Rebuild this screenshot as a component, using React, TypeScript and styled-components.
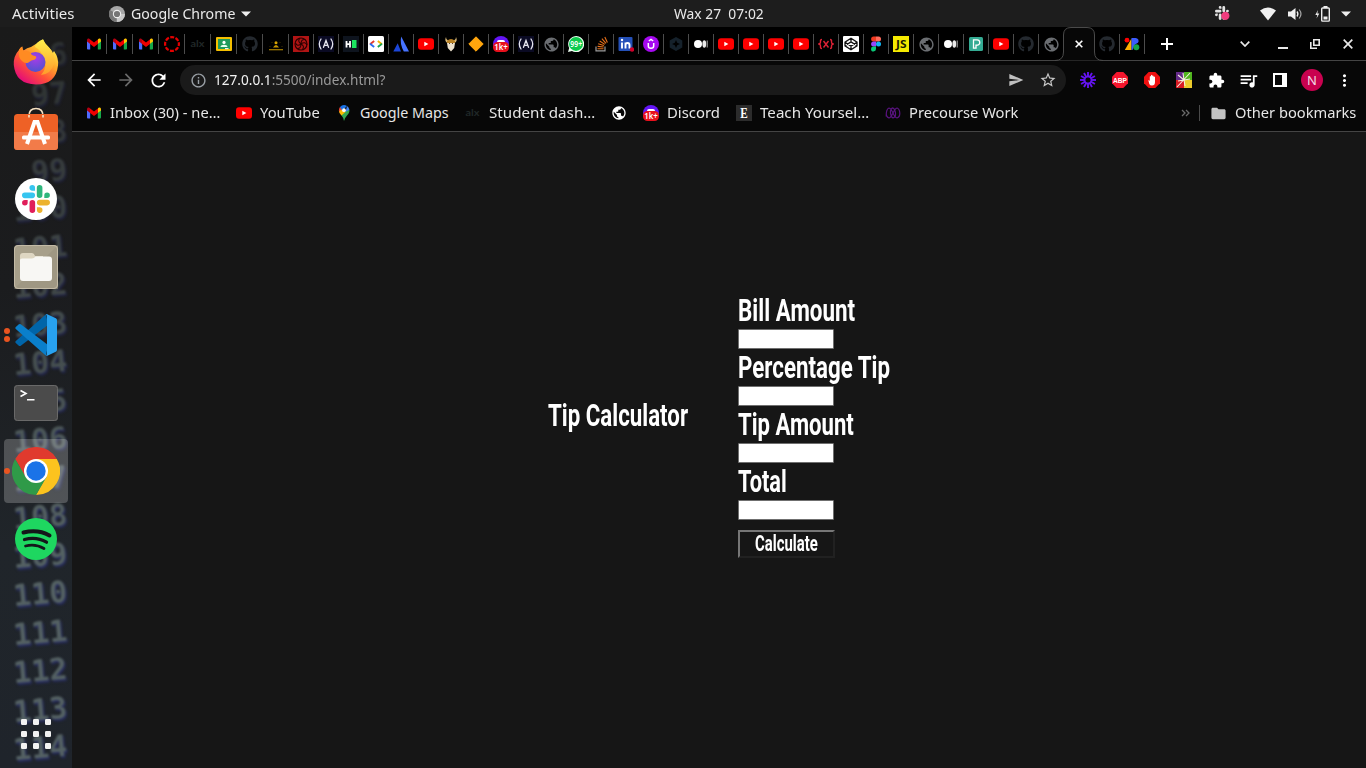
import React, { useLayoutEffect, useRef, useState } from "react";
import styled, { createGlobalStyle } from "styled-components";
import {
  MdPublic, MdQueueMusic, MdExtension, MdArrowBack, MdArrowForward, MdRefresh,
  MdStarBorder, MdSend, MdMoreVert, MdFolder, MdOutlineInfo,
} from "react-icons/md";
import { FaGithub } from "react-icons/fa";

const GlobalStyle = createGlobalStyle`
  * { box-sizing: border-box; }
  body { margin: 0; background: #161616; overflow: hidden; }
  svg { display: block; flex: none; }
`;

const UI = `"Noto Sans", "Open Sans", sans-serif`;

/* ---------- text set to a fixed measure ---------- */
const FitBox = styled.span<{ $w: number }>`
  display: block;
  flex: none;
  width: ${(p) => p.$w}px;
  white-space: pre;
`;
const FitInner = styled.span`
  display: inline-block;
  transform-origin: 0 50%;
`;
function Fit({ w, children }: { w: number; children: React.ReactNode }) {
  const ref = useRef<HTMLSpanElement>(null);
  const [scale, setScale] = useState(1);
  useLayoutEffect(() => {
    if (ref.current) setScale(w / ref.current.offsetWidth);
  }, [w]);
  return (
    <FitBox $w={w}>
      <FitInner ref={ref} style={{ transform: `scaleX(${scale})` }}>{children}</FitInner>
    </FitBox>
  );
}

/* ---------- layout ---------- */
const Desktop = styled.div`
  width: 1366px;
  height: 768px;
  display: flex;
  flex-direction: column;
  overflow: hidden;
  font-family: ${UI};
`;
const TopBar = styled.header`
  height: 27px;
  flex: none;
  display: grid;
  grid-template-columns: 662px 90px 1fr;
  align-items: center;
  padding: 0 12px;
  background: #1d1d1d;
  color: #e9e9e9;
  font-size: 14px;
  line-height: 26px;
`;
const TopLeft = styled.div`
  display: flex;
  align-items: center;
`;
const AppMenu = styled.div`
  display: flex;
  align-items: center;
  gap: 6px;
  margin-left: 35px;
`;
const Tray = styled.div`
  display: flex;
  align-items: center;
  justify-content: flex-end;
  padding-right: 3px;
`;
const TrayIcon = styled.span<{ $gap: number }>`
  margin-left: ${(p) => p.$gap}px;
`;
const Body = styled.div`
  flex: 1;
  display: flex;
  min-height: 0;
`;
const Dock = styled.nav`
  position: relative;
  width: 72px;
  flex: none;
  display: flex;
  flex-direction: column;
  gap: 4px;
  padding: 4px 4px 2px;
  background: linear-gradient(180deg, #1a1a1a 0%, #1b1c1e 35%, #20252a 70%, #1f242b 100%);
  overflow: hidden;
`;
const Wallpaper = styled.div`
  position: absolute;
  inset: 13px 5px auto 0;
  display: flex;
  flex-direction: column;
  align-items: flex-end;
  gap: 8.5px;
  filter: blur(1.2px);
`;
const LineNumber = styled.span<{ $o: number }>`
  height: 30px;
  font: bold 30px/30px "DejaVu Sans Mono", monospace;
  color: #7b8d8c;
  opacity: ${(p) => p.$o};
  transform: rotate(-5deg);
  text-shadow: 1px 2px 2px #2f3590;
`;
const DockItem = styled.div<{ $active?: boolean; $last?: boolean }>`
  position: relative;
  height: 64px;
  flex: none;
  display: flex;
  align-items: center;
  justify-content: center;
  border-radius: 4px;
  background: ${(p) => (p.$active ? "rgba(255,255,255,.22)" : "transparent")};
  margin-top: ${(p) => (p.$last ? "auto" : "0")};
`;
const Pips = styled.div`
  position: absolute;
  left: 0;
  top: 0;
  height: 100%;
  display: flex;
  flex-direction: column;
  justify-content: center;
  gap: 2px;
`;
const Pip = styled.i`
  width: 6px;
  height: 6px;
  border-radius: 50%;
  background: #e95420;
`;
const Browser = styled.main`
  flex: 1;
  display: flex;
  flex-direction: column;
  min-width: 0;
  background: #161616;
`;
const TabStrip = styled.div`
  height: 34px;
  flex: none;
  display: flex;
  background: #000;
  border-bottom: 1px solid #444;
  padding: 1px 13px 0 9px;
`;
const Tab = styled.div<{ $w: number; $sep: boolean }>`
  width: ${(p) => p.$w}px;
  flex: none;
  height: 32px;
  display: flex;
  align-items: center;
  padding-left: ${(p) => (p.$w === 26 ? 5 : 4)}px;
  background: ${(p) =>
    p.$sep ? "linear-gradient(#4c4c4c,#4c4c4c) right 6px / 1px 20px no-repeat" : "none"};
`;
const ActiveTab = styled.div`
  position: relative;
  width: 31px;
  flex: none;
  display: flex;
  align-items: center;
  justify-content: center;
  padding-right: 2px;
`;
const TabShape = styled.svg`
  position: absolute;
  left: -9px;
  top: -1px;
`;
const TabClose = styled.svg`
  position: relative;
`;
const NewTab = styled.div`
  width: 44px;
  display: flex;
  align-items: center;
  justify-content: center;
`;
const WindowControls = styled.div`
  margin-left: auto;
  display: flex;
  align-items: center;
`;
const Control = styled.svg<{ $gap?: number }>`
  margin-left: ${(p) => p.$gap ?? 0}px;
`;
const Toolbar = styled.div`
  height: 38px;
  flex: none;
  display: flex;
  align-items: center;
  padding: 0 6px;
  background: #070707;
`;
const Tool = styled.div`
  width: 32px;
  height: 32px;
  flex: none;
  display: flex;
  align-items: center;
  justify-content: center;
`;
const Omnibox = styled.div`
  flex: 1;
  height: 30px;
  margin: 0 6px;
  padding: 0 2px;
  display: flex;
  align-items: center;
  border-radius: 15px;
  background: #1a1a1a;
  font-size: 14px;
  line-height: 28px;
  color: #9a9a9a;
`;
const Host = styled.span`
  color: #f2f2f2;
`;
const Url = styled.div`
  flex: 1;
`;
const Avatar = styled.div`
  width: 22px;
  height: 22px;
  border-radius: 50%;
  background: #c9024f;
  color: #f3dce6;
  font-size: 13px;
  line-height: 22px;
  text-align: center;
`;
const BookmarkBar = styled.div`
  height: 33px;
  flex: none;
  display: flex;
  align-items: center;
  gap: 16px;
  padding: 0 10px 4px 14px;
  background: #070707;
  border-bottom: 1px solid #444;
  color: #e6e6e6;
  font-size: 14.3px;
  line-height: 26px;
`;
const Bookmark = styled.div`
  display: flex;
  align-items: center;
  gap: 8px;
`;
const Overflow = styled.div`
  margin-left: auto;
  margin-right: -7px;
`;
const Divider = styled.i`
  width: 1px;
  height: 16px;
  background: #4a4a4a;
  margin-right: -6px;
`;
const Page = styled.section`
  flex: 1;
  display: flex;
  justify-content: center;
  gap: 50px;
  padding: 160px 1px 0 0;
  color: #fff;
  font-family: Roboto, "Liberation Sans", sans-serif;
`;
const Title = styled.h1`
  margin: 105px 0 0;
  font-size: 32px;
  font-weight: 700;
  line-height: 37px;
`;
const Form = styled.form`
  width: 151px;
  display: flex;
  flex-direction: column;
  align-items: flex-start;
`;
const Label = styled.label`
  height: 37px;
  font-size: 32px;
  font-weight: 700;
  line-height: 37px;
`;
const Field = styled.input`
  display: block;
  width: 96px;
  height: 20px;
  margin: 0;
  padding: 1px 2px;
  border: 1px solid #6f6f6f;
  border-radius: 1px;
  background: #fff;
`;
const Calculate = styled.button`
  width: 97px;
  height: 28px;
  margin: 10px 0 0;
  padding: 0 0 0 15px;
  border: 2px solid;
  border-color: #767676 #212121 #212121 #767676;
  background: #161616;
  color: #fff;
  text-align: left;
  font: 700 21.5px/24px Roboto, "Liberation Sans", sans-serif;
`;

/* ---------- site icons ---------- */
const Gmail = () => (
  <svg width="16" height="16" viewBox="0 0 16 16">
    <path d="M1 4v8.600q0 .9.9.9H4.200V7z" fill="#4f6bff" />
    <path d="M15 4v8.600q0 .9-.9.9H11.800V7z" fill="#16a84a" />
    <path d="M3.800 3.200L8 6.500l4.200-3.300V7.800L8 11 3.800 7.800z" fill="#f00000" />
    <path d="M1 4.200C1 2.600 2.800 2 4 3.200v4.600L1 5.600z" fill="#b50012" />
    <path d="M15 4.200C15 2.600 13.200 2 12 3.200v4.600l3-2.200z" fill="#ffc400" />
  </svg>
);
const YouTube = () => (
  <svg width="16" height="16" viewBox="0 0 16 16">
    <rect y="2.300" width="16" height="11.400" rx="3" fill="#f00" />
    <path d="M6.300 5.700v4.600L10.400 8z" fill="#fff" />
  </svg>
);
const Canvas = () => (
  <svg width="16" height="16" viewBox="0 0 16 16">
    <circle cx="8" cy="8" r="6.900" fill="none" stroke="#e60000" strokeWidth="2.200" strokeDasharray="4 1.420" strokeDashoffset="2" />
  </svg>
);
const Alx = () => (
  <svg width="16" height="16" viewBox="0 0 16 16">
    <text x="0.500" y="11" fontSize="9.500" fontWeight="700" fill="#202828" fontFamily="Lato" textLength="14" lengthAdjust="spacingAndGlyphs">alx</text>
  </svg>
);
const Classroom = () => (
  <svg width="16" height="16" viewBox="0 0 16 16">
    <rect y="1" width="16" height="14" rx="1" fill="#f5bf00" />
    <rect x="2" y="3" width="12" height="10" fill="#219a5b" />
    <circle cx="8" cy="6.400" r="1.600" fill="#fff" />
    <path d="M4.500 11c0-3 7-3 7 0z" fill="#e9fff0" />
    <rect x="9" y="12" width="3.500" height="1.200" fill="#eee" />
  </svg>
);
const Github = () => <FaGithub size={16} color="#24292f" />;
const Monk = () => (
  <svg width="16" height="16" viewBox="0 0 16 16">
    <circle cx="8" cy="6.700" r="1.500" fill="#d9a400" />
    <path d="M5 11.500q3-5 6 0zM1 13.200h14v1H1z" fill="#c79600" />
    <path d="M2 10v1M14 10v1M4 6v1M12 6v1" stroke="#3d3000" />
  </svg>
);
const Rose = () => (
  <svg width="16" height="16" viewBox="0 0 16 16">
    <rect width="16" height="16" fill="#b01414" />
    <g fill="none" stroke="#2a0000" strokeWidth="1.100">
      <circle cx="8" cy="8" r="6" />
      <path d="M8 8q-4-3-1-6M8 8q0-5 4-4.500M8 8q4-3 6 1M8 8q4 2 1.500 5.500M8 8q0 5-4 4.500M8 8q-4 3-5.500-1" />
    </g>
  </svg>
);
const FreeCode = () => (
  <svg width="16" height="16" viewBox="0 0 16 16">
    <rect width="16" height="16" fill="#0a0a23" />
    <g fill="none" stroke="#e4e4ee" strokeWidth="1.300" strokeLinecap="round">
      <path d="M3 3Q-.4 8 3 13M13 3q3.400 5 0 10M5.500 11.300L8 4.500l2.500 6.800M7 9.300h2.500" />
    </g>
  </svg>
);
const HackerEarth = () => (
  <svg width="16" height="16" viewBox="0 0 16 16">
    <rect width="16" height="16" fill="#0e141e" />
    <path d="M3.500 5v6.500M7 5v6.500M3 8.200h4" stroke="#fff" strokeWidth="1.800" />
    <rect x="9" y="4" width="4.500" height="8" fill="#1be560" />
  </svg>
);
const DevSite = () => (
  <svg width="16" height="16" viewBox="0 0 16 16">
    <rect width="16" height="16" rx="1.500" fill="#fff" />
    <g fill="none" strokeWidth="1.900">
      <path d="M6.200 5L2 8.200" stroke="#e63b2e" /><path d="M2 7.800L6.200 11" stroke="#2c6df2" />
      <path d="M9.800 5L14 8.200" stroke="#f5b400" /><path d="M14 7.800L9.800 11" stroke="#18a34f" />
    </g>
  </svg>
);
const Atlassian = () => (
  <svg width="16" height="16" viewBox="0 0 16 16">
    <path d="M4.700 7.200l3.300 8.300H.3z" fill="#1c46d8" />
    <path d="M8.200.5L16 15.500h-5.200Q6.500 7.500 8.200.5z" fill="#4673ff" />
  </svg>
);
const Viking = () => (
  <svg width="16" height="16" viewBox="0 0 16 16">
    <path d="M3 1q0 3 2 3.500h6Q13 4 13 1q2 4-1.500 6h-7Q1 5 3 1z" fill="#d9b978" />
    <path d="M4 5q4-4 8 0v2H4z" fill="#b98225" />
    <path d="M4 7h8l-.8 5L8 15.500 4.800 12z" fill="#ede2cd" />
    <path d="M6 7.500h1M9 7.500h1" stroke="#54402c" />
  </svg>
);
const Diamond = () => (
  <svg width="16" height="16" viewBox="0 0 16 16">
    <path d="M8 .8L15.200 8 8 15.200.8 8z" fill="#ffa50d" stroke="#ffa50d" strokeLinejoin="round" />
  </svg>
);
const DiscordBadge = () => (
  <svg width="16" height="16" viewBox="0 0 16 16">
    <circle cx="8" cy="8" r="8" fill="#6415f5" />
    <path d="M4 6q0-2 2-2h4q2 0 2 2z" fill="#fff" />
    <rect y="6" width="16" height="10" rx="4.500" fill="#e8101c" />
    <text x="1.300" y="14.200" fontSize="8.500" fill="#fff" fontFamily="Noto Sans" fontWeight="600" textLength="13.500" lengthAdjust="spacingAndGlyphs">1k+</text>
  </svg>
);
const Globe = () => <MdPublic size={17} color="#6b6e72" />;
const WhatsApp = () => (
  <svg width="16" height="16" viewBox="0 0 16 16">
    <path d="M0 16l1.200-4A8 8 0 1 1 4 14.900z" fill="#effff3" />
    <circle cx="8" cy="7.900" r="7" fill="#0dcb4c" />
    <text x="2.300" y="11" fontSize="8.500" fill="#fff" fontFamily="Noto Sans" fontWeight="600" textLength="11.800" lengthAdjust="spacingAndGlyphs">99+</text>
  </svg>
);
const Stack = () => (
  <svg width="16" height="16" viewBox="0 0 16 16">
    <path d="M3 10.500v4.300h9v-4.300" fill="none" stroke="#9a9a9a" strokeWidth="1.200" />
    <path d="M4.500 12.700h6M4.600 10.400l6 .6M5.200 7.700l5.700 1.900M6.700 5l5.100 3.400M8.900 2.700l4.100 4.700M11.800 1l2.600 5.600" stroke="#e8701a" strokeWidth="1.100" />
  </svg>
);
const LinkedIn = () => (
  <svg width="16" height="16" viewBox="0 0 16 16">
    <rect x=".5" y="1" width="14" height="14" rx="1" fill="#2450b8" />
    <path d="M4 6.500v6M7.500 6.500v6M7.500 9q0-2 2-2t2 2v3.500" fill="none" stroke="#fff" strokeWidth="1.900" />
    <circle cx="4" cy="4" r="1.200" fill="#fff" />
    <circle cx="14" cy="13.500" r="2.200" fill="#d1002a" />
  </svg>
);
const Udemy = () => (
  <svg width="16" height="16" viewBox="0 0 16 16">
    <circle cx="8" cy="8" r="8" fill="#a609f0" />
    <path d="M5.300 7v3q0 2.300 2.700 2.300t2.700-2.300V7M5.800 5L8 3.500 10.200 5" fill="none" stroke="#fff" strokeWidth="1.500" />
  </svg>
);
const Hexagon = () => (
  <svg width="16" height="16" viewBox="0 0 16 16">
    <path d="M8 1l6.300 3.500v7L8 15l-6.300-3.500v-7z" fill="#15212b" />
    <path d="M8 4l1.200 2.800L12 8 9.200 9.200 8 12 6.800 9.200 4 8l2.800-1.200z" fill="#000" />
  </svg>
);
const Medium = () => (
  <svg width="16" height="16" viewBox="0 0 16 16">
    <circle cx="5" cy="8" r="4" fill="#fff" />
    <ellipse cx="11.300" cy="8" rx="1.900" ry="3.700" fill="#e8e8e8" />
    <rect x="13.700" y="4.500" width="1" height="7" fill="#aaa" />
  </svg>
);
const BraceX = () => (
  <svg width="16" height="16" viewBox="0 0 16 16">
    <path d="M4 3.500q-1.800 0-1.500 2T1 8q1.800.5 1.500 2.500t1.500 2M12 3.500q1.800 0 1.500 2T15 8q-1.800.5-1.500 2.500t-1.500 2M5.500 5l5 6.500M10.500 5l-5 6.500" fill="none" stroke="#dd2135" strokeWidth="1.400" />
  </svg>
);
const Codepen = () => (
  <svg width="16" height="16" viewBox="0 0 16 16">
    <rect width="16" height="16" rx="1" fill="#fff" />
    <path d="M8 2.300l6 3.900v3.600l-6 3.900-6-3.900V6.200zM2 6.200l6 3.900 6-3.900M2 9.800l6-3.900 6 3.900M8 2.300v3.600M8 10.100v3.600" fill="none" stroke="#111" strokeWidth="1.300" />
  </svg>
);
const Figma = () => (
  <svg width="16" height="16" viewBox="0 0 16 16">
    <path d="M8 .5H5.600a2.500 2.500 0 0 0 0 5H8z" fill="#f03a20" />
    <path d="M8 .5h2.500a2.500 2.500 0 0 1 0 5H8z" fill="#ff6a5c" />
    <path d="M8 5.500H5.600a2.500 2.500 0 0 0 0 5H8z" fill="#9747ff" />
    <circle cx="10.500" cy="8" r="2.500" fill="#0fb5f5" />
    <path d="M8 10.500H5.600A2.500 2.500 0 1 0 8 13z" fill="#0ac878" />
  </svg>
);
const JsIcon = () => (
  <svg width="16" height="16" viewBox="0 0 16 16">
    <rect width="16" height="16" fill="#f5ea00" />
    <text x="3" y="12" fontSize="10" fontWeight="700" fill="#1a1a00" fontFamily="Noto Sans" textLength="10.500" lengthAdjust="spacingAndGlyphs">JS</text>
  </svg>
);
const Pexels = () => (
  <svg width="16" height="16" viewBox="0 0 16 16">
    <rect x="1" y="1" width="14" height="14" rx="1.500" fill="#34ab93" />
    <path d="M5.500 3.800h3.700a2.700 2.700 0 0 1 .6 5.300H8v3.100H5.500z" fill="none" stroke="#fff" strokeWidth="1.300" />
  </svg>
);
const Shapes = () => (
  <svg width="16" height="16" viewBox="0 0 16 16">
    <path d="M7.500 2.500v11.500H.8z" fill="#ffb000" />
    <circle cx="3" cy="4.200" r="2.400" fill="#f00" />
    <path d="M7.500 2h4a3 3 0 0 1 2.500 4.800l-3 1.700-2.500 5.500h-1z" fill="#3b5bff" />
    <circle cx="12.300" cy="11.200" r="3" fill="#16a34a" />
  </svg>
);
const MapPin = () => (
  <svg width="16" height="16" viewBox="0 0 16 16">
    <path d="M8 16Q7.500 12.500 5.200 10L10.800 5l2.200-1.500Q14.500 7 11 10.600 8.800 13 8 16z" fill="#34a853" />
    <path d="M5.500 10.500Q2.800 8 2.800 5.500L6 3l3.500 4z" fill="#fbbc04" />
    <path d="M4 2Q2.300 4 3 6.700L7 3z" fill="#ea4335" />
    <path d="M4 2Q7-1.200 11 .9L6.300 5.800z" fill="#1a73e8" />
    <path d="M11 .9Q13.300 2.300 13.200 5L9.500 7z" fill="#4285f4" />
    <circle cx="8" cy="5.200" r="1.900" fill="#fff" />
  </svg>
);
const Teach = () => (
  <svg width="16" height="16" viewBox="0 0 16 16">
    <rect width="16" height="16" fill="#2c2c2c" />
    <text x="4.300" y="13.300" fontSize="14" fontWeight="700" fill="#fff" fontFamily="Liberation Serif" textLength="7.500" lengthAdjust="spacingAndGlyphs">E</text>
  </svg>
);
const Precourse = () => (
  <svg width="16" height="16" viewBox="0 0 16 16">
    <path d="M1.200 11.500Q1 4 4 3q2 .5 4 5t4 5q3-1 2.800-5T12 3q-2 .5-4 5t-4 5q-2.500-.5-2.800-4M5.800 5Q7 2.500 8 3q2 1 2.500 5T8 13q-2-1-2.500-5T8 3" fill="none" stroke="#5a1380" strokeWidth="1.200" />
  </svg>
);

/* ---------- extension icons ---------- */
const Burst = () => (
  <svg width="16" height="16" viewBox="-8 -8 16 16">
    {Array.from({ length: 12 }, (_, i) => (
      <path key={i} d="M0-2.800V-8" stroke="#6414f0" strokeWidth="1.900" transform={`rotate(${i * 30})`} />
    ))}
    <circle r="3.500" fill="none" stroke="#6414f0" strokeWidth="1.500" />
  </svg>
);
const Octagon = "M4.700 0h6.600L16 4.700v6.600L11.300 16H4.700L0 11.300V4.700z";
const Abp = () => (
  <svg width="16" height="16" viewBox="0 0 16 16">
    <path d={Octagon} fill="#f5152d" />
    <text x="1" y="10.800" fontSize="7.800" fontWeight="700" fill="#fff" fontFamily="Liberation Sans" textLength="14" lengthAdjust="spacingAndGlyphs">ABP</text>
  </svg>
);
const AdBlock = () => (
  <svg width="16" height="16" viewBox="0 0 16 16">
    <path d={Octagon} fill="#f01010" />
    <path d="M4.300 8.300q1-.4 1.500.8V4.500q.6-.9 1.200 0V3.200q.6-.9 1.300 0v.8q.6-.9 1.300 0v1q.8-.8 1.400 0V10q0 3.600-3 3.600-2 0-2.700-1.600z" fill="#fff" />
  </svg>
);
const Pinwheel = () => (
  <svg width="16" height="16" viewBox="0 0 16 16">
    <path d="M0 0h8v8H0z" fill="#642a88" /><path d="M8 0h8v8H8z" fill="#50b51e" />
    <path d="M0 8h8v8H0z" fill="#d91b24" /><path d="M8 8h8v8H8z" fill="#eccb2c" />
    <path d="M1 15L14 1M2 3l6 5M7 1l1 7M8 8l1 6M8 8l6-1M2 9l6-1" stroke="#f5efe0" strokeWidth="1.100" />
  </svg>
);
const SidePanel = () => (
  <svg width="14" height="14" viewBox="0 0 14 14">
    <path d="M1 1h12v12H1z" fill="none" stroke="#fff" strokeWidth="2" /><path d="M9 0h5v14H9z" fill="#fff" />
  </svg>
);

/* ---------- dock icons ---------- */
const Firefox = () => (
  <svg width="46" height="50" viewBox="0 0 46 50">
    <defs>
      <linearGradient id="ffx" x1=".85" y1=".1" x2=".2" y2=".95">
        <stop offset="0" stopColor="#fff44f" /><stop offset=".35" stopColor="#ffa62a" />
        <stop offset=".65" stopColor="#ff5038" /><stop offset="1" stopColor="#e3097c" />
      </linearGradient>
      <radialGradient id="ffg" cx=".5" cy=".3" r=".7">
        <stop offset="0" stopColor="#a93be8" /><stop offset="1" stopColor="#5152cf" />
      </radialGradient>
      <linearGradient id="ffy" x1="0" y1="0" x2="0" y2="1">
        <stop offset="0" stopColor="#fff04a" /><stop offset="1" stopColor="#ff9a2b" />
      </linearGradient>
    </defs>
    <path d="M6 12Q7 9.500 9.200 8.500 9.300 11 10.500 12.500 14 9.500 18 9L30 1.500Q31.500 5.500 36 9.500 38.500 12 39.500 15.500L41 13Q46 20 45 27.500 43 46.500 23 46.500 2.500 46 .8 27 .2 18 6 12z" fill="url(#ffx)" />
    <path d="M22 9Q23 4 30 1.200 31.500 5.500 36 9.500 43 16 41 26 38 36 28 37 35 30 31 20 28 12 22 9z" fill="url(#ffy)" />
    <circle cx="22.500" cy="24" r="10" fill="url(#ffg)" />
    <path d="M9.200 8.500Q9.500 12 11 13.200 14 12.500 18 14.500 17.500 17 22 18 24.500 19 22 21.500 18 22 15.500 24.500 12 26 9 23 5 20 6 12 7 9.500 9.200 8.500z" fill="#ff8b22" />
  </svg>
);
const Software = () => (
  <svg width="44" height="49" viewBox="0 0 44 49">
    <path d="M15 9q0-7.500 7-7.500T29 9" fill="none" stroke="#f4dfc0" strokeWidth="1.700" />
    <rect y="7" width="44" height="36" rx="3.500" fill="#ee6126" />
    <path d="M0 25h44v14.500q0 3.500-3.500 3.500h-37Q0 43 0 39.500z" fill="#f27b49" />
    <path d="M13 37l7.500-22h3L31 37" fill="none" stroke="#fff" strokeWidth="4" />
    <rect x="8" y="28.500" width="28" height="4" rx="1.500" fill="#fff" />
    <path d="M15 8v2.500M29 8v2.500" stroke="#f4dfc0" strokeWidth="1.700" />
  </svg>
);
const slackPart =
  "M19.712.133a5.381 5.381 0 0 0-5.376 5.387 5.381 5.381 0 0 0 5.376 5.386h5.376V5.520A5.381 5.381 0 0 0 19.712.133m0 14.365H5.376A5.381 5.381 0 0 0 0 19.884a5.381 5.381 0 0 0 5.376 5.387h14.336a5.381 5.381 0 0 0 5.376-5.387 5.381 5.381 0 0 0-5.376-5.386";
const SlackMark = ({ colors }: { colors: string[] }) => (
  <>{colors.map((c, i) => <path key={i} d={slackPart} fill={c} transform={`rotate(${i * 90} 26.880 26.880)`} />)}</>
);
const Slack = () => (
  <svg width="42" height="42" viewBox="0 0 42 42">
    <circle cx="21" cy="21" r="21" fill="#fff" />
    <g transform="translate(7 7) scale(.52)"><SlackMark colors={["#36c5f0", "#2eb67d", "#ecb22e", "#e01e5a"]} /></g>
  </svg>
);
const Files = () => (
  <svg width="44" height="44" viewBox="0 0 44 44">
    <rect width="44" height="44" rx="4" fill="#a79f8a" />
    <path d="M44 0v44H0z" fill="#9a927e" opacity=".6" />
    <rect x=".5" y=".5" width="43" height="43" rx="3.500" fill="none" stroke="#c3baa6" />
    <path d="M6 20v-9q0-3 3-3h9q2 0 3 3h8v9z" fill="#ded6c2" />
    <path d="M6 15q0-1.500 2-1.500h10q2 0 3.500-2H35q3 0 3 3V33q0 3-3 3H9q-3 0-3-3z" fill="#f8f7f4" />
  </svg>
);
const Code = () => (
  <svg width="42" height="42" viewBox="0 0 42 42">
    <path d="M31 .3L.8 27q-1 1 0 2l3 2.700q1 .6 2 0L33 11z" fill="#0065a9" />
    <path d="M31 41.700L.8 15q-1-1 0-2l3-2.700q1-.6 2 0L33 31z" fill="#0a7fcb" />
    <path d="M31 .3q.6-.4 1.300 0l8.500 4q1.200.6 1.200 2v29.500q0 1.300-1.200 1.900l-8.500 4q-.7.3-1.300 0 1-1 1-2.500V2.800q0-1.500-1-2.500z" fill="#28a2f0" />
  </svg>
);
const Terminal = () => (
  <svg width="44" height="36" viewBox="0 0 44 36">
    <rect width="44" height="36" rx="3.500" fill="#4b4b4b" />
    <rect x=".5" y=".5" width="43" height="35" rx="3" fill="none" stroke="#696969" />
    <path d="M6.500 5.500l5.500 3-5.500 3M13 14.700h7.500" fill="none" stroke="#fff" strokeWidth="1.600" />
  </svg>
);
const Chrome = () => (
  <svg width="48" height="48" viewBox="0 0 48 48">
    <path d="M3.200 12A24 24 0 0 1 44.800 12H24L13.600 30z" fill="#e03a2e" />
    <path d="M44.800 12A24 24 0 0 1 24 48L34.400 30 24 12z" fill="#fcc31e" />
    <path d="M24 48A24 24 0 0 1 3.200 12L13.600 30H34.400z" fill="#2f9a48" />
    <circle cx="24" cy="24" r="12" fill="#fff" />
    <circle cx="24" cy="24" r="9.700" fill="#1a73e8" />
  </svg>
);
const Spotify = () => (
  <svg width="42" height="42" viewBox="0 0 42 42">
    <circle cx="21" cy="21" r="21" fill="#1ed760" />
    <g fill="none" stroke="#14161a" strokeLinecap="round">
      <path d="M8.500 14.500q14.500-3.500 26 3" strokeWidth="4" />
      <path d="M9.500 21.500q12-3.200 22 2.700" strokeWidth="3.300" />
      <path d="M10.500 28q10-2.500 18.500 2.500" strokeWidth="2.700" />
    </g>
  </svg>
);
const AppGrid = () => (
  <svg width="30" height="30" viewBox="0 0 30 30">
    {[0, 12, 24].map((y) => [0, 12, 24].map((x) => (
      <rect key={`${x}-${y}`} x={x} y={y} width="6" height="6" rx="1.200" fill="#f2f2f2" />
    )))}
  </svg>
);

/* ---------- data ---------- */
const firstTabs = [Gmail, Gmail, Gmail, Canvas, Alx, Classroom, Github, Monk];
const otherTabs = [
  Rose, FreeCode, HackerEarth, DevSite, Atlassian, YouTube, Viking, Diamond, DiscordBadge, FreeCode, Globe,
  WhatsApp, Stack, LinkedIn, Udemy, Hexagon, Medium, YouTube, YouTube, YouTube, YouTube,
  BraceX, Codepen, Figma, JsIcon, Globe, Medium, Pexels, YouTube, Github, Globe,
];
const bookmarks: { icon: React.ReactNode; text?: string; w: number }[] = [
  { icon: <Gmail />, text: "Inbox (30) - ne…", w: 110 },
  { icon: <YouTube />, text: "YouTube", w: 60 },
  { icon: <MapPin />, text: "Google Maps", w: 89 },
  { icon: <Alx />, text: "Student dash…", w: 106 },
  { icon: <MdPublic size={16} color="#fff" />, w: 0 },
  { icon: <DiscordBadge />, text: "Discord", w: 53 },
  { icon: <Teach />, text: "Teach Yoursel…", w: 109 },
  { icon: <Precourse />, text: "Precourse Work", w: 109 },
];
const fields: [string, number][] = [["Bill Amount", 117], ["Percentage Tip", 152], ["Tip Amount", 116], ["Total", 49]];
const dock = [
  { icon: <Firefox />, pips: 0 }, { icon: <Software />, pips: 0 }, { icon: <Slack />, pips: 0 },
  { icon: <Files />, pips: 0 }, { icon: <Code />, pips: 2 }, { icon: <Terminal />, pips: 0 },
  { icon: <Chrome />, pips: 1, active: true }, { icon: <Spotify />, pips: 0 },
];

export default function App() {
  return (
    <Desktop>
      <GlobalStyle />
      <TopBar>
        <TopLeft>
          <Fit w={62}>Activities</Fit>
          <AppMenu>
            <svg width="16" height="16" viewBox="0 0 16 16">
              <circle cx="8" cy="8" r="8" fill="#a6a6a6" />
              <path d="M8 8L1 4A8 8 0 0 0 7.500 16z" fill="#777" /><path d="M8 8h8a8 8 0 0 1-8 8z" fill="#c9c9c9" />
              <circle cx="8" cy="8" r="4.200" fill="#eee" /><circle cx="8" cy="8" r="3.100" fill="#757575" />
            </svg>
            <Fit w={104}>Google Chrome</Fit>
            <svg width="10" height="6" viewBox="0 0 10 6"><path d="M0 .5h10L5 5.500z" fill="#eee" /></svg>
          </AppMenu>
        </TopLeft>
        <Fit w={90}>{"Wax 27  07:02"}</Fit>
        <Tray>
          <svg width="15" height="15" viewBox="0 0 58 58">
            <SlackMark colors={["#e4e4e4", "#e4e4e4", "#e4e4e4", "#e4e4e4"]} />
            <circle cx="40" cy="38" r="16" fill="#f03c7e" />
          </svg>
          <TrayIcon $gap={30}><svg width="16" height="14" viewBox="0 0 16 14"><path d="M0 3.500Q8-2.500 16 3.500L8 13.500z" fill="#f0f0f0" /></svg></TrayIcon>
          <TrayIcon $gap={12}>
            <svg width="15" height="14" viewBox="0 0 15 14">
              <path d="M0 4.500h3L7.500 1v12L3 9.500H0z" fill="#f0f0f0" />
              <path d="M9 4.500q1.800 2.500 0 5" fill="none" stroke="#f0f0f0" strokeWidth="1.300" />
              <path d="M11.200 2.500q3.500 4.500 0 9" fill="none" stroke="#a8a8a8" strokeWidth="1.200" />
            </svg>
          </TrayIcon>
          <TrayIcon $gap={12}>
            <svg width="15" height="16" viewBox="0 0 15 16">
              <path d="M3 4L.3 9h2L1.500 12.500 4.300 7.500h-2z" fill="#eee" />
              <path d="M7.500 2h6q.8 0 .8.8v11.500q0 .8-.8.800h-6q-.8 0-.8-.8V2.800q0-.8.8-.8z" fill="none" stroke="#eee" strokeWidth="1.400" />
              <path d="M8.500 0h4v2h-4zM8.500 10.500h4v3h-4z" fill="#eee" />
            </svg>
          </TrayIcon>
          <TrayIcon $gap={11}><svg width="10" height="6" viewBox="0 0 10 6"><path d="M0 .5h10L5 5.500z" fill="#eee" /></svg></TrayIcon>
        </Tray>
      </TopBar>
      <Body>
        <Dock>
          <Wallpaper>
            {Array.from({ length: 19 }, (_, i) => (
              <LineNumber key={i} $o={Math.min(0.58, 0.2 + i * 0.03)}>{96 + i}</LineNumber>
            ))}
          </Wallpaper>
          {dock.map((d, i) => (
            <DockItem key={i} $active={d.active}>
              {d.pips > 0 && <Pips>{Array.from({ length: d.pips }, (_, k) => <Pip key={k} />)}</Pips>}
              {d.icon}
            </DockItem>
          ))}
          <DockItem $last><AppGrid /></DockItem>
        </Dock>
        <Browser>
          <TabStrip>
            {firstTabs.map((Icon, i) => <Tab key={i} $w={26} $sep><Icon /></Tab>)}
            {otherTabs.map((Icon, i) => <Tab key={i} $w={25} $sep={i < otherTabs.length - 1}><Icon /></Tab>)}
            <ActiveTab>
              <TabShape width="49" height="35" viewBox="0 0 49 35">
                <path d="M0 33.500Q8.500 33.500 8.500 25V8Q8.500.5 16 .5H32Q39.500.5 39.500 8V25Q39.500 33.500 48 33.500" fill="#070707" stroke="#4a4a4a" />
                <path d="M1 34h47v1H1z" fill="#070707" />
              </TabShape>
              <TabClose width="8" height="8" viewBox="0 0 8 8"><path d="M.7.7l6.600 6.600M7.300.7L.7 7.300" stroke="#fff" strokeWidth="1.600" /></TabClose>
            </ActiveTab>
            <Tab $w={25} $sep><Github /></Tab>
            <Tab $w={25} $sep><Shapes /></Tab>
            <NewTab><svg width="12" height="12" viewBox="0 0 12 12"><path d="M6 0v12M0 6h12" stroke="#fff" strokeWidth="2" /></svg></NewTab>
            <WindowControls>
              <Control width="10" height="6" viewBox="0 0 10 6"><path d="M.7.7L5 5 9.300.7" fill="none" stroke="#e8e8e8" strokeWidth="1.700" /></Control>
              <Control $gap={28} width="10" height="10" viewBox="0 0 10 10"><path d="M0 9h10" stroke="#e8e8e8" strokeWidth="2" /></Control>
              <Control $gap={22} width="10" height="10" viewBox="0 0 10 10"><path d="M3.800.8h5.400v5.400H3.800zM.8 3v6.200H7" fill="none" stroke="#e8e8e8" strokeWidth="1.600" /></Control>
              <Control $gap={23} width="10" height="10" viewBox="0 0 10 10"><path d="M.7.7l8.600 8.600M9.300.7L.7 9.300" stroke="#e8e8e8" strokeWidth="1.700" /></Control>
            </WindowControls>
          </TabStrip>
          <Toolbar>
            <Tool><MdArrowBack size={20} color="#fff" /></Tool>
            <Tool><MdArrowForward size={20} color="#6a6a6a" /></Tool>
            <Tool><MdRefresh size={21} color="#fff" /></Tool>
            <Omnibox>
              <Tool><MdOutlineInfo size={17} color="#9aa0a6" /></Tool>
              <Url><Fit w={171}><Host>127.0.0.1</Host>:5500/index.html?</Fit></Url>
              <Tool><MdSend size={16} color="#c0c0c0" /></Tool>
              <Tool><MdStarBorder size={18} color="#c8c8c8" /></Tool>
            </Omnibox>
            <Tool><Burst /></Tool>
            <Tool><Abp /></Tool>
            <Tool><AdBlock /></Tool>
            <Tool><Pinwheel /></Tool>
            <Tool><MdExtension size={17} color="#fff" /></Tool>
            <Tool><MdQueueMusic size={21} color="#fff" /></Tool>
            <Tool><SidePanel /></Tool>
            <Tool><Avatar>N</Avatar></Tool>
            <Tool><MdMoreVert size={19} color="#fff" /></Tool>
          </Toolbar>
          <BookmarkBar>
            {bookmarks.map((b, i) => (
              <Bookmark key={i}>{b.icon}{b.text && <Fit w={b.w}>{b.text}</Fit>}</Bookmark>
            ))}
            <Overflow>
              <svg width="9" height="8" viewBox="0 0 9 8"><path d="M1 1l3 3-3 3M5 1l3 3-3 3" fill="none" stroke="#6a6a6a" strokeWidth="1.300" /></svg>
            </Overflow>
            <Divider />
            <Bookmark><MdFolder size={17} color="#c3c3c3" /><Fit w={121}>Other bookmarks</Fit></Bookmark>
          </BookmarkBar>
          <Page>
            <Title><Fit w={140}>Tip Calculator</Fit></Title>
            <Form onSubmit={(e) => e.preventDefault()}>
              {fields.map(([name, w]) => (
                <React.Fragment key={name}>
                  <Label htmlFor={name}><Fit w={w}>{name}</Fit></Label>
                  <Field id={name} type="text" />
                </React.Fragment>
              ))}
              <Calculate type="submit"><Fit w={63}>Calculate</Fit></Calculate>
            </Form>
          </Page>
        </Browser>
      </Body>
    </Desktop>
  );
}
